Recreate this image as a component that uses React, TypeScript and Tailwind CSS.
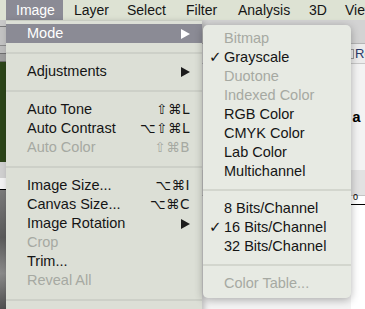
import React from 'react';

const font = { fontFamily: '"Liberation Sans", Arial, "DejaVu Sans", sans-serif' };
const sym = { fontFamily: '"DejaVu Sans", sans-serif' };

type Item =
  | { kind: 'sep'; h?: string }
  | { kind: 'item'; label: string; shortcut?: string; arrow?: boolean; disabled?: boolean; active?: boolean; checked?: boolean };

const Arrow: React.FC<{ white?: boolean }> = ({ white }) => (
  <svg width="9" height="10" viewBox="0 0 9 10" className="block">
    <polygon points="0,0 9,5 0,10" fill={white ? '#ffffff' : '#1c1c1c'} />
  </svg>
);

const mainItems: Item[] = [
  { kind: 'item', label: 'Mode', arrow: true, active: true },
  { kind: 'sep' },
  { kind: 'item', label: 'Adjustments', arrow: true },
  { kind: 'sep' },
  { kind: 'item', label: 'Auto Tone', shortcut: '⇧⌘L' },
  { kind: 'item', label: 'Auto Contrast', shortcut: '⌥⇧⌘L' },
  { kind: 'item', label: 'Auto Color', shortcut: '⇧⌘B', disabled: true },
  { kind: 'sep' },
  { kind: 'item', label: 'Image Size...', shortcut: '⌥⌘I' },
  { kind: 'item', label: 'Canvas Size...', shortcut: '⌥⌘C' },
  { kind: 'item', label: 'Image Rotation', arrow: true },
  { kind: 'item', label: 'Crop', disabled: true },
  { kind: 'item', label: 'Trim...' },
  { kind: 'item', label: 'Reveal All', disabled: true },
  { kind: 'sep' },
];

const subItems: Item[] = [
  { kind: 'item', label: 'Bitmap', disabled: true },
  { kind: 'item', label: 'Grayscale', checked: true },
  { kind: 'item', label: 'Duotone', disabled: true },
  { kind: 'item', label: 'Indexed Color', disabled: true },
  { kind: 'item', label: 'RGB Color' },
  { kind: 'item', label: 'CMYK Color' },
  { kind: 'item', label: 'Lab Color' },
  { kind: 'item', label: 'Multichannel' },
  { kind: 'sep', h: 'h-[18px]' },
  { kind: 'item', label: '8 Bits/Channel' },
  { kind: 'item', label: '16 Bits/Channel', checked: true },
  { kind: 'item', label: '32 Bits/Channel' },
  { kind: 'sep', h: 'h-[18px]' },
  { kind: 'item', label: 'Color Table...', disabled: true },
];

const menuBar = [
  { label: 'Image', w: 'w-[57px] pl-[10px]', active: true },
  { label: 'Layer', w: 'w-[53px] pl-[11px]' },
  { label: 'Select', w: 'w-[59px] pl-[11px]' },
  { label: 'Filter', w: 'w-[52px] pl-[11px]' },
  { label: 'Analysis', w: 'w-[71px] pl-[11px]' },
  { label: '3D', w: 'w-[36px] pl-[11px]' },
  { label: 'View', w: 'w-[60px] pl-[11px]' },
];

export default function App() {
  return (
    <div className="relative w-[365px] h-[309px] overflow-hidden bg-[#f1f1f1]" style={font}>
      {/* menu bar */}
      <div className="flex h-[20px] bg-[#dde2d3] pl-[6px] text-[14px] text-[#151515] whitespace-nowrap">
        {menuBar.map((m) => (
          <div
            key={m.label}
            className={`${m.w} shrink-0 flex items-center ${m.active ? 'bg-[#8b8b95] text-white' : ''}`}
          >
            {m.label}
          </div>
        ))}
      </div>

      {/* app window behind the menus */}
      <div className="flex h-[289px]">
        <div className="w-[6px] flex flex-col">
          <div className="h-[7px] bg-[#c9c9c9] border-b border-[#7a7a7a]" />
          <div className="h-[18px] bg-[#c2c2c2]" />
          <div className="h-[8px] bg-[#bcbcbc] border-t border-[#8a8a8a]" />
          <div className="h-[9px] bg-[#9d9d9d] border-y border-[#6d6d6d]" />
          <div className="h-[100px] bg-[#2c4419]" />
          <div className="h-[16px] bg-[#cfcfcf]" />
          <div className="h-[12px] bg-[#f2f2f2] border-b border-black" />
          <div className="flex-1 bg-[linear-gradient(180deg,#7a7a7a,#5a5a5a_40%,#8a8a8a_70%,#4f4f4f)]" />
        </div>
        <div className="flex-1 flex flex-col">
          <div className="h-[24px] bg-[#d3d3d3] border-b border-[#b5b5b5]" />
          <div className="h-[20px] bg-[#ececec] border-b border-[#c8c8c8]" />
          <div className="h-[106px] bg-[#f3f3f3]" />
          <div className="h-[26px] bg-[#e2e2e2] border-b border-[#c4c4c4]" />
          <div className="flex-1 bg-[#f4f4f4]" />
        </div>
        <div className="w-[14px] flex flex-col text-[13px] whitespace-nowrap">
          <div className="h-[24px] bg-[#d3d3d3] border-b border-[#b5b5b5]" />
          <div className="h-[20px] bg-[#ececec] border-b border-[#c8c8c8] flex items-center gap-[1px] text-[#2a3b6a]">
            <span className="shrink-0 w-[3px] h-[10px] border border-[#9a9a9a] border-l-0" />
            <span>Re</span>
          </div>
          <div className="h-[106px] bg-[#f3f3f3] flex items-start pt-[44px] pl-[1px]">
            <span className="text-[15px] text-black font-bold whitespace-nowrap" style={{ fontFamily: '"Liberation Mono", monospace' }}>a c</span>
          </div>
          <div className="h-[26px] bg-[#e2e2e2] border-b border-[#c4c4c4]" />
          <div className="h-[9px] bg-white border-b border-black relative">
            <span className="absolute left-[2px] -top-[3px] text-[9px] leading-none text-black">0</span>
          </div>
          <div className="flex-1 bg-white" />
        </div>
      </div>

      {/* Image menu */}
      <div className="absolute left-[6px] top-[20px] w-[196px] h-[300px] bg-[#dcdfd6] pt-[3px] border-t border-[#c8ccc2] shadow-[2px_2px_6px_rgba(0,0,0,0.25)] text-[14.5px] whitespace-nowrap">
        {mainItems.map((it, i) =>
          it.kind === 'sep' ? (
            <div key={i} className="h-[19px] flex items-center">
              <div className="w-full h-[2px] bg-[#cdd0c8]" />
            </div>
          ) : (
            <div
              key={i}
              className={`h-[19px] flex items-center justify-between pl-[21px] pr-[12px] ${
                it.active ? 'bg-[#8b8b95] text-white' : it.disabled ? 'text-[#a6a9a2]' : 'text-[#151515]'
              }`}
            >
              <span>{it.label}</span>
              {it.arrow ? (
                <Arrow white={it.active} />
              ) : it.shortcut ? (
                <span className="text-[13.5px] tracking-[0.5px]" style={sym}>{it.shortcut}</span>
              ) : null}
            </div>
          )
        )}
      </div>

      {/* Mode submenu */}
      <div className="absolute left-[203px] top-[25px] w-[148px] bg-[#e7eae3] rounded-[5px] pt-[4px] pb-[5px] shadow-[0_2px_8px_rgba(0,0,0,0.3)] text-[14.5px] whitespace-nowrap">
        {subItems.map((it, i) =>
          it.kind === 'sep' ? (
            <div key={i} className={`${it.h ?? 'h-[19px]'} flex items-center`}>
              <div className="w-full h-[2px] bg-[#d3d6ce]" />
            </div>
          ) : (
            <div
              key={i}
              className={`h-[19px] flex items-center pl-[6px] ${it.disabled ? 'text-[#a6a9a2]' : 'text-[#151515]'}`}
            >
              <span className="w-[15px] text-[15px] font-bold" style={sym}>{it.checked ? '✓' : ''}</span>
              <span>{it.label}</span>
            </div>
          )
        )}
      </div>
    </div>
  );
}
